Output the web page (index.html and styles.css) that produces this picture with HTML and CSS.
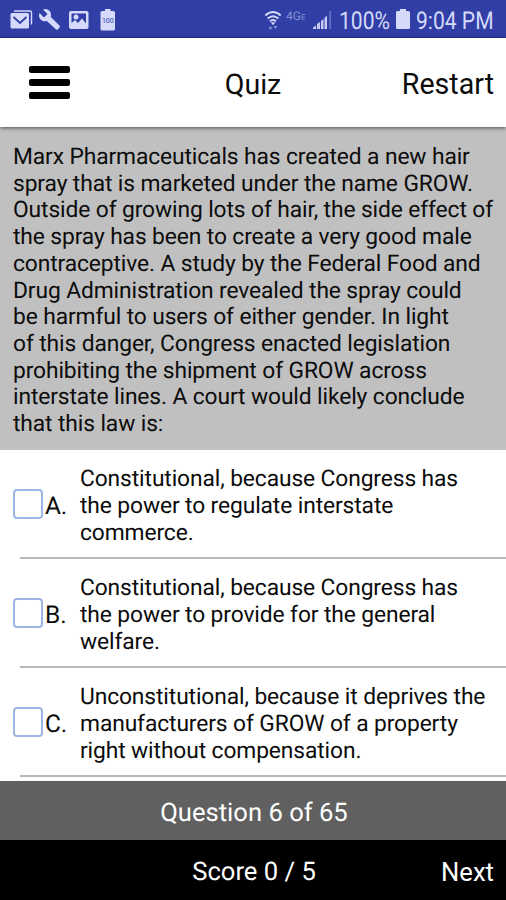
FILE: index.html
```html
<!DOCTYPE html>
<html lang="en">
<head>
  <meta charset="UTF-8" />
  <meta name="viewport" content="width=device-width, initial-scale=1.0"/>
  <title>Quiz</title>
  <link rel="stylesheet" href="styles.css">
</head>
<body>
  <div class="app">
    <div class="status-bar">
      <svg class="notifications" width="120" height="37" viewBox="0 0 120 37">
        <!-- mail -->
        <path d="M14 11h16q1.500 0 1.500 1.500v12" fill="none" stroke="#d5dafa" stroke-width="1.400"/>
        <rect x="10.500" y="13" width="18.500" height="15.500" rx="1.500" fill="#d5dafa"/>
        <path d="M13.500 17l6.500 6 6.500-6" fill="none" stroke="#303ea6" stroke-width="1.800"/>
        <!-- wrench -->
        <path d="M43 9.500l4.500 4.500-3.500 3.500-4.500-4.500c-1.300 3.500.3 7 3.500 8 1.500.5 2.700.4 3.800 0l9 8.300q1.300 1 2.500-.2l1.200-1.300q1-1.200-.1-2.300l-8.600-8.500c.9-3-.2-6-2.800-7.300q-2.300-1.200-5-.2z" fill="#d5dafa"/>
        <!-- picture -->
        <rect x="69" y="11" width="19.500" height="18" rx="2" fill="#d5dafa"/>
        <path d="M71.500 13.500h14.500v10l-4-5-4 4.500-3-3-3.500 3z" fill="#303ea6"/>
        <circle cx="76" cy="17" r="2.500" fill="#d5dafa"/>
        <!-- battery level -->
        <path d="M105 9h5.500v2h3q1.500 0 1.500 1.500v16.500q0 1.500-1.500 1.500h-11.500q-1.500 0-1.500-1.500v-16.500q0-1.500 1.500-1.500h3z" fill="#d5dafa"/>
        <text x="107.800" y="23" class="tiny-level">100</text>
      </svg>
      <div class="system">
        <svg class="wifi" width="18" height="20" viewBox="1 0 18 20">
          <g fill="none" stroke="#d5dafa" stroke-width="1.800">
            <path d="M2.300 5.500q7.700-7 15.400 0"/>
            <path d="M4.600 8.500q5.400-4.600 10.800 0"/>
            <path d="M6.900 11.300q3.100-2.600 6.200 0"/>
          </g>
          <path d="M7.700 12.300h4.600l-2.300 3z" fill="#d5dafa"/>
          <path d="M5.500 19l2-3 2 3zM10.500 16l2 3 2-3z" fill="#8790d2"/>
        </svg>
        <span class="network">4G<small>E</small></span>
        <svg class="signal" width="19" height="20" viewBox="0 0 19 20">
          <path d="M0 19v-1.500l3-2v3.500zM4 19v-5l3-2v7zM8 19v-8l2.500-2v10zM11.500 19v-11l2.500-2.500v13.500z" fill="#c5cbf2"/>
          <path d="M16.500 19v-18h1.300v18z" fill="#7781ca"/>
        </svg>
        <span class="percent">100%</span>
        <svg class="battery" width="14" height="20" viewBox="0 0 14 20">
          <path d="M4 0h6v2h2.500q1.500 0 1.500 1.500v15q0 1.500-1.500 1.500h-11q-1.500 0-1.500-1.500v-15q0-1.500 1.500-1.500h2.500z" fill="#d5dafa"/>
        </svg>
        <span class="clock">9:04 PM</span>
      </div>
    </div>

    <header class="toolbar">
      <button class="menu" aria-label="Menu">
        <span></span>
        <span></span>
        <span></span>
      </button>
      <h1 class="title">Quiz</h1>
      <button class="restart">Restart</button>
    </header>

    <div class="question">
      Marx Pharmaceuticals has created a new hair<br>
      spray that is marketed under the name GROW.<br>
      Outside of growing lots of hair, the side effect of<br>
      the spray has been to create a very good male<br>
      contraceptive. A study by the Federal Food and<br>
      Drug Administration revealed the spray could<br>
      be harmful to users of either gender. In light<br>
      of this danger, Congress enacted legislation<br>
      prohibiting the shipment of GROW across<br>
      interstate lines. A court would likely conclude<br>
      that this law is:
    </div>

    <div class="answers">
      <div class="answer">
        <span class="box"></span>
        <span class="letter">A.</span>
        <p>Constitutional, because Congress has<br>the power to regulate interstate<br>commerce.</p>
      </div>
      <div class="answer">
        <span class="box"></span>
        <span class="letter">B.</span>
        <p>Constitutional, because Congress has<br>the power to provide for the general<br>welfare.</p>
      </div>
      <div class="answer">
        <span class="box"></span>
        <span class="letter">C.</span>
        <p>Unconstitutional, because it deprives the<br>manufacturers of GROW of a property<br>right without compensation.</p>
      </div>
    </div>

    <div class="progress">Question 6 of 65</div>
    <footer class="score-bar">
      <span class="score">Score 0 / 5</span>
      <button class="next">Next</button>
    </footer>
  </div>
</body>
</html>
```
FILE: styles.css
```css
* {
  box-sizing: border-box;
}

body {
  margin: 0;
  font-family: Roboto, sans-serif;
  color: #0c0c0c;
  background: #fff;
  text-rendering: geometricPrecision;
}

button {
  padding: 0;
  border: none;
  background: none;
  color: inherit;
  font: inherit;
  letter-spacing: inherit;
  cursor: pointer;
}

.app {
  display: flex;
  flex-direction: column;
  height: 900px;
  overflow: hidden;
}

/* Status bar */
.status-bar {
  display: flex;
  justify-content: space-between;
  flex: none;
  height: 38px;
  background: #303ea6;
  border-bottom: 1px solid #28358f;
  color: #d5dafa;
}

.tiny-level {
  font-size: 7px;
  text-anchor: middle;
  fill: #303ea6;
}

.system {
  display: flex;
  align-items: center;
  padding: 3px 12px 0 0;
  font-size: 24.5px;
  white-space: nowrap;
}

.network {
  width: 22px;
  margin: -9px 0 0 4px;
  color: #8790d2;
  font-size: 12px;
}

.network small {
  font-size: 8px;
}

.signal {
  margin-left: 5px;
}

/* The system font is narrower than the app font */
.percent,
.clock {
  transform: scaleX(0.86);
  transform-origin: left;
}

.percent {
  width: 50px;
  margin-left: 7px;
}

.battery {
  margin: -2px 6px 0 7px;
}

.clock {
  width: 78px;
}

/* Toolbar */
.toolbar {
  display: grid;
  grid-template-columns: 1fr auto 1fr;
  align-items: center;
  flex: none;
  height: 89px;
  padding: 2px 12px 0;
  position: relative;
  background: #fff;
  box-shadow: 0 1px 4px rgba(0, 0, 0, 0.6);
  font-size: 28.6px;
}

.menu {
  display: flex;
  flex-direction: column;
  gap: 6px;
  width: 41px;
  margin: -2px 0 0 17px;
}

.menu span {
  height: 7px;
  border-radius: 2px;
  background: #000;
}

.title {
  margin: 0;
  font-size: 28.6px;
  font-weight: normal;
}

.restart {
  justify-self: end;
}

/* Question */
.question {
  flex: none;
  height: 323px;
  padding: 17px 0 0 13px;
  background: #c0c0c0;
  font-size: 22.8px;
  line-height: 26.7px;
  letter-spacing: -0.11px;
  white-space: nowrap;
}

/* Answers */
.answers {
  flex: 1;
  min-height: 0;
  overflow: hidden;
  font-size: 22.8px;
  line-height: 26.75px;
  letter-spacing: -0.11px;
}

.answer {
  display: grid;
  grid-template-columns: 32px 35px 1fr;
  align-items: center;
  height: 109px;
  padding-left: 13px;
  white-space: nowrap;
  background: linear-gradient(#b8b8b8, #b8b8b8) 20px 100% / 100% 2px no-repeat;
}

.answer p {
  margin: 4px 0 0;
}

.box {
  width: 30px;
  height: 30px;
  margin-top: -1px;
  border: 2px solid #9db5e4;
  border-radius: 4px;
}

.letter {
  margin-top: 3px;
  font-size: 24.5px;
}

/* Bottom bars */
.progress {
  flex: none;
  height: 59px;
  padding-left: 2px;
  background: #606060;
  color: #fff;
  font-size: 25.6px;
  line-height: 64px;
  text-align: center;
}

.score-bar {
  display: grid;
  grid-template-columns: 1fr auto 1fr;
  align-items: center;
  flex: none;
  height: 60px;
  padding: 4px 12px 0 14px;
  background: #000;
  color: #fff;
  font-size: 25.6px;
}

.score {
  grid-column: 2;
}

.next {
  justify-self: end;
}
```
